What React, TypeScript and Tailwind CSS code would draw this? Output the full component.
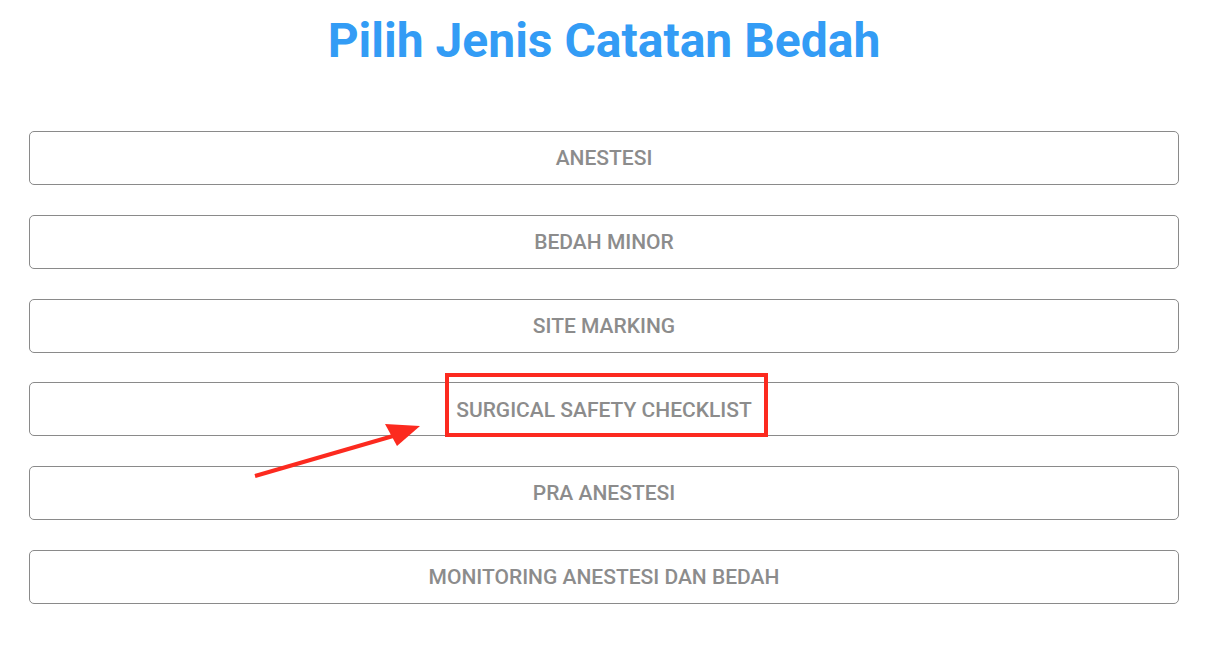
const items = [
  "ANESTESI",
  "BEDAH MINOR",
  "SITE MARKING",
  "SURGICAL SAFETY CHECKLIST",
  "PRA ANESTESI",
  "MONITORING ANESTESI DAN BEDAH",
];

export default function App() {
  return (
    <div className="relative min-h-[650px] w-[1224px] bg-white font-['Roboto',sans-serif]">
      <div className="pl-[29px] pr-[45px] pt-[14px]">
        <h1 className="text-center text-[48px] font-bold leading-[54px] text-[#339cf5]">
          Pilih Jenis Catatan Bedah
        </h1>
        <div className="mt-[63px] flex flex-col gap-[29.8px]">
          {items.map((label) => (
            <button
              key={label}
              type="button"
              className="h-[54px] w-full rounded-[5px] border border-[#8a8a8a] bg-white pt-[2px] text-[21px] font-medium text-[#8c8c8c]"
            >
              {label}
            </button>
          ))}
        </div>
      </div>

      {/* annotation: red box + arrow */}
      <div className="pointer-events-none absolute left-[445px] top-[373px] h-[64px] w-[323px] border-[4px] border-[#fc2a1f]" />
      <svg
        className="pointer-events-none absolute left-0 top-0"
        width="1224"
        height="650"
        viewBox="0 0 1224 650"
      >
        <line x1="255" y1="476" x2="400" y2="434" stroke="#fc2a1f" strokeWidth="4" />
        <polygon points="420,426 385,424 397,446" fill="#fc2a1f" />
      </svg>
    </div>
  );
}
